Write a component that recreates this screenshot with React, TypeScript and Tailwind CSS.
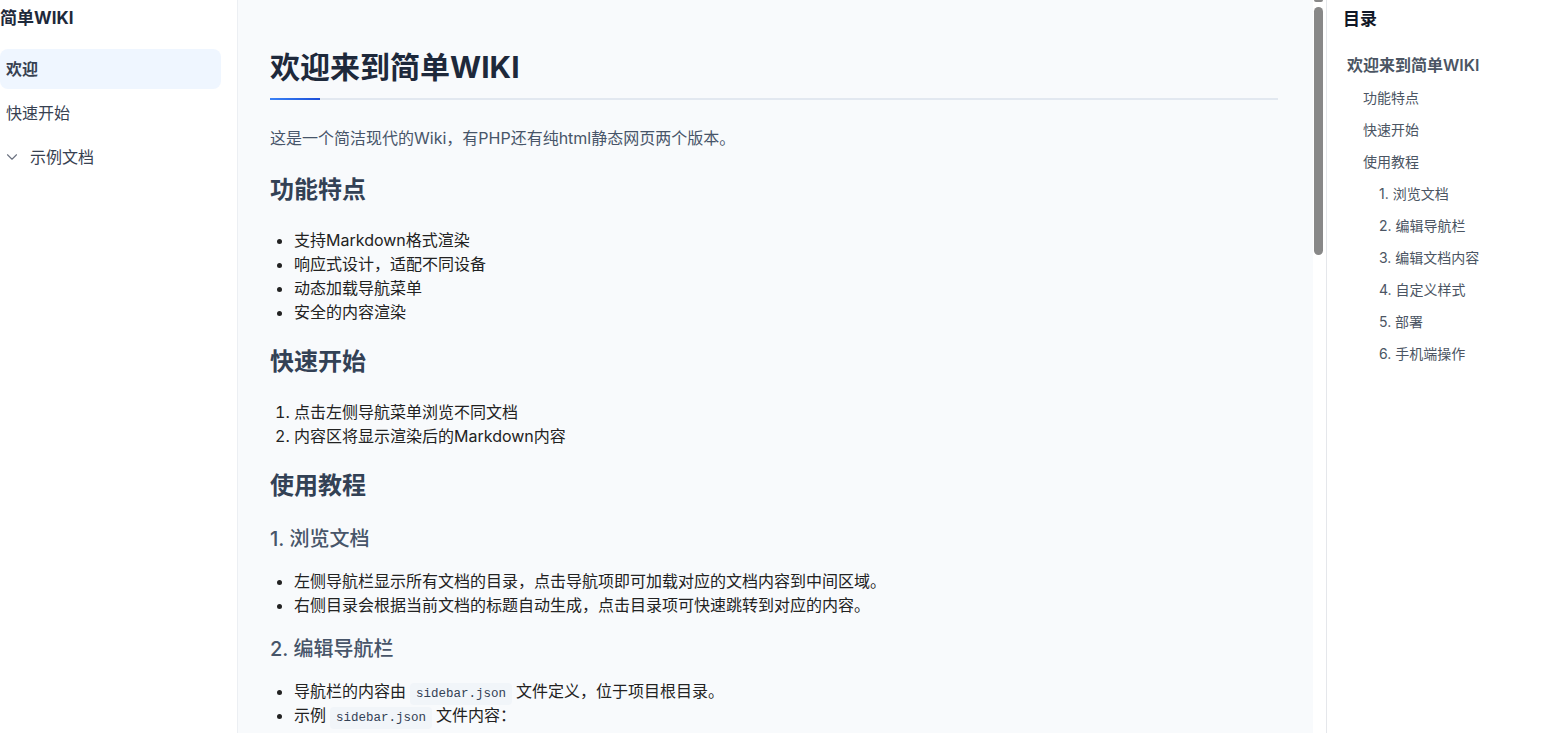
import React from "react";
import { ChevronDown } from "lucide-react";

const font = { fontFamily: 'Inter, "Noto Sans CJK SC", sans-serif' };

function Code({ children }: { children: React.ReactNode }) {
  return (
    <code className="mx-[4px] rounded-[4px] bg-[#f1f5f9] px-[6px] py-[4px] text-[12.5px] leading-none text-[#334155] [font-family:'Liberation_Mono',monospace]">
      {children}
    </code>
  );
}

function LeftSidebar() {
  return (
    <aside className="flex w-[238px] shrink-0 flex-col border-r border-[#eceff3] bg-white pr-4 shadow-[2px_0_6px_rgba(15,23,42,0.04)]">
      <div className="h-[37px] pt-[6px] text-[17px] font-bold leading-[24px] text-[#1e293b]">简单WIKI</div>
      <nav className="mt-[12px] flex flex-col gap-[4px]">
        <div className="flex h-[40px] items-center rounded-lg bg-[#eff6ff] pl-[6px] text-[16px] font-semibold text-[#374151]">欢迎</div>
        <div className="flex h-[40px] items-center rounded-lg pl-[6px] text-[16px] text-[#374151]">快速开始</div>
        <div className="flex h-[40px] items-center rounded-lg pl-[6px] text-[16px] text-[#374151]">
          <ChevronDown size={18} strokeWidth={1.5} className="-ml-[3px] mr-[9px] text-[#6b7280]" />
          示例文档
        </div>
      </nav>
    </aside>
  );
}

function MainContent() {
  return (
    <main className="flex min-w-0 flex-1 bg-[#f8fafc]">
      <div className="min-w-0 flex-1 overflow-hidden pl-8 pr-[35px] pt-[47px]">
        <h1 className="relative border-b-2 border-[#e2e8f0] pb-[11px] text-[30px] font-bold leading-[40px] text-[#1e293b]">
          欢迎来到简单WIKI
          <span className="absolute bottom-[-2px] left-0 h-[2px] w-[50px] bg-gradient-to-r from-[#3b82f6] to-[#1d4ed8]" />
        </h1>
        <p className="mt-6 text-[16px] leading-[28px] text-[#475569]">这是一个简洁现代的Wiki，有PHP还有纯html静态网页两个版本。</p>

        <h2 className="mt-[22px] text-[24px] font-bold leading-[32px] text-[#334155]">功能特点</h2>
        <ul className="mt-[22px] list-disc pl-6 text-[16px] leading-[24px] text-[#222]">
          <li>支持Markdown格式渲染</li>
          <li>响应式设计，适配不同设备</li>
          <li>动态加载导航菜单</li>
          <li>安全的内容渲染</li>
        </ul>

        <h2 className="mt-[22px] text-[24px] font-bold leading-[32px] text-[#334155]">快速开始</h2>
        <ol className="mt-[22px] list-decimal pl-6 text-[16px] leading-[24px] text-[#222]">
          <li>点击左侧导航菜单浏览不同文档</li>
          <li>内容区将显示渲染后的Markdown内容</li>
        </ol>

        <h2 className="mt-[22px] text-[24px] font-bold leading-[32px] text-[#334155]">使用教程</h2>

        <h3 className="mt-[23px] text-[20px] font-medium leading-[28px] text-[#475569]">1. 浏览文档</h3>
        <ul className="mt-[16px] list-disc pl-6 text-[16px] leading-[24px] text-[#222]">
          <li>左侧导航栏显示所有文档的目录，点击导航项即可加载对应的文档内容到中间区域。</li>
          <li>右侧目录会根据当前文档的标题自动生成，点击目录项可快速跳转到对应的内容。</li>
        </ul>

        <h3 className="mt-[18px] text-[20px] font-medium leading-[28px] text-[#475569]">2. 编辑导航栏</h3>
        <ul className="mt-[16px] list-disc pl-6 text-[16px] leading-[24px] text-[#222]">
          <li>
            导航栏的内容由<Code>sidebar.json</Code>文件定义，位于项目根目录。
          </li>
          <li>
            示例<Code>sidebar.json</Code>文件内容：
          </li>
        </ul>
      </div>
      <div className="flex w-[13px] shrink-0 flex-col bg-white">
        <div className="ml-px h-[2px] w-[9px] rounded-b-full bg-[#888]" />
        <div className="ml-px mt-[5px] h-[248px] w-[9px] rounded-full bg-[#888]" />
      </div>
    </main>
  );
}

function Toc() {
  const items: { t: string; lvl: number }[] = [
    { t: "功能特点", lvl: 2 },
    { t: "快速开始", lvl: 2 },
    { t: "使用教程", lvl: 2 },
    { t: "1. 浏览文档", lvl: 3 },
    { t: "2. 编辑导航栏", lvl: 3 },
    { t: "3. 编辑文档内容", lvl: 3 },
    { t: "4. 自定义样式", lvl: 3 },
    { t: "5. 部署", lvl: 3 },
    { t: "6. 手机端操作", lvl: 3 },
  ];
  return (
    <aside className="w-[231px] shrink-0 border-l border-[#e5e7eb] bg-white pl-4">
      <div className="pt-[7px] text-[17px] font-bold leading-[24px] text-[#111827]">目录</div>
      <div className="mt-[24px] pl-[4px] text-[16px] font-semibold leading-[20px] text-[#4b5563]">欢迎来到简单WIKI</div>
      <div className="mt-[6px] flex flex-col">
        {items.map((it) => (
          <div
            key={it.t}
            className={
              "flex h-[32px] items-center text-[14px] text-[#4b5563] " +
              (it.lvl === 2 ? "pl-[20px]" : "pl-[36px]")
            }
          >
            {it.t}
          </div>
        ))}
      </div>
    </aside>
  );
}

export default function App() {
  return (
    <div className="flex h-[733px] w-full overflow-hidden bg-white" style={font}>
      <LeftSidebar />
      <MainContent />
      <Toc />
    </div>
  );
}
